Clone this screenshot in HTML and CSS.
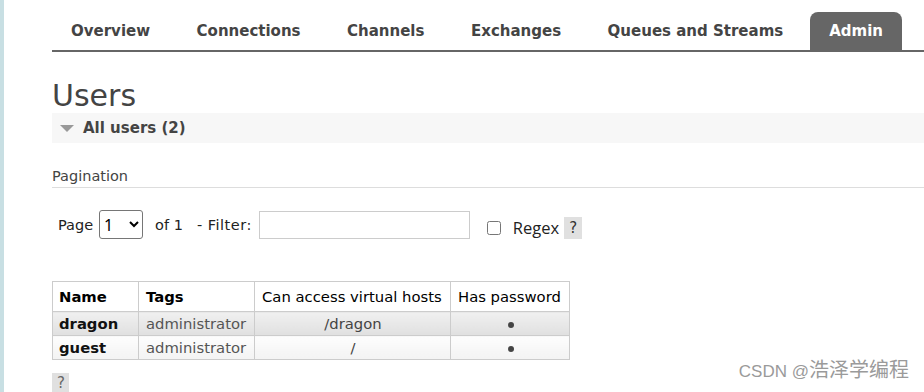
FILE: index.html
```html
<!DOCTYPE html>
<html lang="en">
  <head>
    <meta charset="UTF-8" />
    <title>RabbitMQ Management: Users</title>
    <link rel="stylesheet" href="styles.css">
  </head>
  <body>
    <div class="page">
      <ul class="tabs">
        <li><a href="#">Overview</a></li>
        <li><a href="#">Connections</a></li>
        <li><a href="#">Channels</a></li>
        <li><a href="#">Exchanges</a></li>
        <li><a href="#">Queues and Streams</a></li>
        <li class="selected"><a href="#">Admin</a></li>
      </ul>

      <h1>Users</h1>
      <div class="section-head">
        <span class="arrow"></span>
        <span>All users (2)</span>
      </div>

      <h3 class="sub-title">Pagination</h3>
      <div class="filter-row">
        <span>Page</span>
        <select class="page-select">
          <option>1</option>
        </select>
        <span class="of">of 1</span>
        <span class="filter-label">- Filter:</span>
        <input type="text" class="filter-input" />
        <label class="regex"><input type="checkbox" /> Regex</label>
        <span class="help">?</span>
      </div>

      <table class="list">
        <thead>
          <tr>
            <th class="c-name">Name</th>
            <th class="c-tags">Tags</th>
            <th class="c-vhost">Can access virtual hosts</th>
            <th class="c-pass">Has password</th>
          </tr>
        </thead>
        <tbody>
          <tr class="alt1">
            <td class="user">dragon</td>
            <td>administrator</td>
            <td class="center">/dragon</td>
            <td class="center"><span class="dot"></span></td>
          </tr>
          <tr class="alt2">
            <td class="user">guest</td>
            <td>administrator</td>
            <td class="center">/</td>
            <td class="center"><span class="dot"></span></td>
          </tr>
        </tbody>
      </table>

      <span class="help help-bottom">?</span>
    </div>
    <div class="watermark">CSDN @<span class="cjk">浩泽学编程</span></div>
  </body>
</html>
```

FILE: styles.css
```css
html,
body {
  margin: 0;
  padding: 0;
  height: 100%;
  overflow: hidden;
}
body {
  font-family: "DejaVu Sans", Verdana, sans-serif;
  color: #484848;
  background: #fff;
  border-left: 4px solid #c8dfe3;
  box-sizing: border-box;
}
.page {
  padding: 12px 0 0 48px;
}
.tabs {
  list-style: none;
  margin: 0;
  padding: 0;
  display: flex;
  border-bottom: 2px solid #666;
  height: 38px;
}
.tabs li {
  display: flex;
  align-items: center;
  padding: 0 20px;
  margin-right: 6.5px;
  border-radius: 8px 8px 0 0;
}
.tabs li:first-child {
  padding-left: 19px;
}
.tabs a {
  color: #444;
  text-decoration: none;
  font-weight: 700;
  font-size: 15px;
}
.tabs li.selected {
  background: #666;
  padding: 0 19.5px;
}
.tabs li.selected a {
  color: #fff;
}
h1 {
  margin: 27px 0 0;
  font-size: 30px;
  font-weight: 400;
  color: #444;
  line-height: 34px;
}
.section-head {
  background: #f7f7f7;
  height: 30px;
  display: flex;
  align-items: center;
  gap: 9px;
  padding-left: 8px;
  font-size: 15px;
  font-weight: 700;
  color: #444;
}
.arrow {
  width: 0;
  height: 0;
  border-left: 7px solid transparent;
  border-right: 7px solid transparent;
  border-top: 7px solid #999;
  margin-top: 1px;
}
.sub-title {
  margin: 24px 0 0;
  font-size: 14.5px;
  font-weight: 400;
  color: #444;
  padding-bottom: 2px;
  border-bottom: 1px solid #ddd;
  line-height: 18px;
}
.filter-row {
  display: flex;
  align-items: center;
  padding: 22px 0 0 6px;
  font-size: 14.5px;
  color: #222;
}
.page-select {
  margin-left: 6px;
  width: 44px;
  height: 29px;
  font-size: 16px;
  font-family: "Noto Sans", sans-serif;
  border: 1px solid #767676;
  border-radius: 3px;
  background: #fff;
  color: #000;
}
.of {
  margin-left: 12px;
}
.filter-label {
  margin-left: 14px;
  letter-spacing: 0.5px;
}
.filter-input {
  margin-left: 7px;
  width: 211px;
  height: 28px;
  box-sizing: border-box;
  border: 1px solid #ccc;
  padding: 2px 4px;
}
.regex {
  margin-left: 17px;
  display: flex;
  align-items: center;
  gap: 12px;
  position: relative;
  top: 3px;
  font-family: "Open Sans", "Noto Sans", sans-serif;
  font-size: 16.5px;
}
.regex input {
  margin: 0;
  width: 14px;
  height: 14px;
}
.help {
  display: inline-block;
  background: #e0e0e0;
  color: #333;
  font-size: 15px;
  line-height: 18px;
  padding: 2px 5px;
  margin-left: 5px;
  position: relative;
  top: 3px;
}
.list {
  margin-top: 42px;
  border-collapse: collapse;
  font-size: 14.8px;
}
.list th,
.list td {
  border: 1px solid #ccc;
  padding: 0 6px 0 7px;
  text-align: left;
  white-space: nowrap;
}
.list th {
  height: 29px;
  color: #000;
  font-weight: 400;
}
.list th.c-name,
.list th.c-tags {
  font-weight: 700;
}
.list th.c-name,
.list td.user {
  padding-left: 6px;
}
.c-name {
  width: 73px;
}
.c-tags {
  width: 102px;
}
.c-vhost {
  width: 182px;
}
.c-pass {
  width: 105px;
}
.list td {
  height: 23px;
  color: #555;
}
.list td.user {
  font-weight: 700;
  color: #111;
}
.list td.center {
  text-align: center;
  color: #444;
}
.dot {
  display: inline-block;
  width: 6px;
  height: 6px;
  border-radius: 50%;
  background: #444;
  vertical-align: middle;
}
.alt1 td {
  background: linear-gradient(#f0f0f0, #e0e0e0);
}
.alt2 td {
  background: linear-gradient(#fdfdfd, #f3f3f3);
}
.help-bottom {
  margin: 13px 0 0;
  top: 0;
  padding: 1px 4px 1px 5px;
  color: #666;
}
.watermark {
  position: absolute;
  right: 15px;
  bottom: 9px;
  font-family: "Liberation Sans", "Noto Sans CJK SC", sans-serif;
  font-size: 17px;
  color: #9a9a9a;
}
.watermark .cjk {
  font-size: 20px;
}
```
